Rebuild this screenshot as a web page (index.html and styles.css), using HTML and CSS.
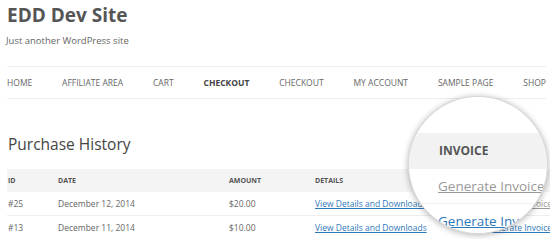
FILE: index.html
```html
<!DOCTYPE html>
<html lang="en">
<head>
    <meta charset="UTF-8">
    <title>EDD Dev Site</title>
    <link rel="stylesheet" href="styles.css">
</head>
<body>
<div class="page">
    <div class="site-head">
        <h1 class="site-title">EDD Dev Site</h1>
        <p class="site-desc">Just another WordPress site</p>
    </div>
    <ul class="nav">
        <li>Home</li>
        <li>Affiliate Area</li>
        <li>Cart</li>
        <li class="current">Checkout</li>
        <li>Checkout</li>
        <li>My Account</li>
        <li>Sample Page</li>
        <li>Shop</li>
    </ul>
    <h2 class="entry-title">Purchase History</h2>
    <table class="history">
        <thead>
        <tr>
            <th class="c-id">ID</th>
            <th class="c-date">Date</th>
            <th class="c-amount">Amount</th>
            <th class="c-details">Details</th>
            <th>Invoice</th>
        </tr>
        </thead>
        <tbody>
        <tr>
            <td>#25</td>
            <td>December 12, 2014</td>
            <td>$20.00</td>
            <td><a href="#">View Details and Downloads</a></td>
            <td><a href="#" class="visited">Generate Invoice</a></td>
        </tr>
        <tr>
            <td>#13</td>
            <td>December 11, 2014</td>
            <td>$10.00</td>
            <td><a href="#">View Details and Downloads</a></td>
            <td><a href="#">Generate Invoice</a></td>
        </tr>
        </tbody>
    </table>
</div>
<!-- lupe ueber der invoice spalte -->
<div class="lens">
    <div class="lens-head">Invoice</div>
    <div class="lens-row"><a href="#" class="visited">Generate Invoice</a></div>
    <div class="lens-row"><a href="#">Generate Invoice</a></div>
</div>
</body>
</html>
```

FILE: styles.css
```css
* {
    margin: 0;
    padding: 0;
}
body {
    background-color: #fff;
    font-family: "Open Sans", "DejaVu Sans", sans-serif;
    color: #666;
    overflow: hidden;
}
.page {
    padding: 0 4px 0 7px;
}
.site-head {
    height: 66px;
}
.site-title {
    font-size: 19px;
    font-weight: bold;
    color: #555;
    line-height: 28px;
    padding-top: 1px;
}
.site-desc {
    font-size: 9.5px;
    color: #666;
    margin-top: 5px;
    margin-left: -1px;
}
.nav {
    list-style: none;
    display: flex;
    justify-content: space-between;
    height: 31px;
    line-height: 31px;
    border-top: 1px solid #eee;
    border-bottom: 1px solid #eee;
    font-size: 8.5px;
    text-transform: uppercase;
    color: #666;
}
.nav .current {
    font-weight: bold;
    color: #444;
}
.entry-title {
    font-size: 15.5px;
    font-weight: normal;
    color: #444;
    margin-top: 35px;
    line-height: 20px;
    padding-left: 1px;
}
.history {
    border-collapse: collapse;
    width: 547px;
    margin-top: 15px;
    font-size: 8.5px;
}
.history th,
.history td {
    height: 23px;
    padding: 0 0 0 1px;
    text-align: left;
    vertical-align: middle;
    white-space: nowrap;
}
.history th {
    background-color: #f4f4f4;
    font-size: 7px;
    font-weight: bold;
    color: #555;
    text-transform: uppercase;
}
.history tbody tr + tr td {
    border-top: 1px solid #eee;
}
.c-id { width: 49px; }
.c-date { width: 170px; }
.c-amount { width: 85px; }
.c-details { width: 169px; }
a {
    color: #2e79b9;
}
a.visited {
    color: #999;
}
.lens {
    position: absolute;
    left: 408px;
    top: 96px;
    width: 140px;
    height: 138px;
    border-radius: 50%;
    overflow: hidden;
    background-color: #fff;
    border: 1px solid #d8d8d8;
    box-shadow: 0 1px 6px rgba(0, 0, 0, 0.3);
    padding-top: 36px;
    box-sizing: border-box;
}
.lens-head {
    height: 36px;
    line-height: 36px;
    background-color: #f2f2f2;
    padding-left: 30px;
    font-size: 12px;
    font-weight: bold;
    color: #555;
    text-transform: uppercase;
}
.lens-row {
    height: 34px;
    line-height: 34px;
    padding-left: 29px;
    font-size: 13.5px;
    white-space: nowrap;
}
.lens-row + .lens-row {
    border-top: 1px solid #f0f0f0;
}
```
